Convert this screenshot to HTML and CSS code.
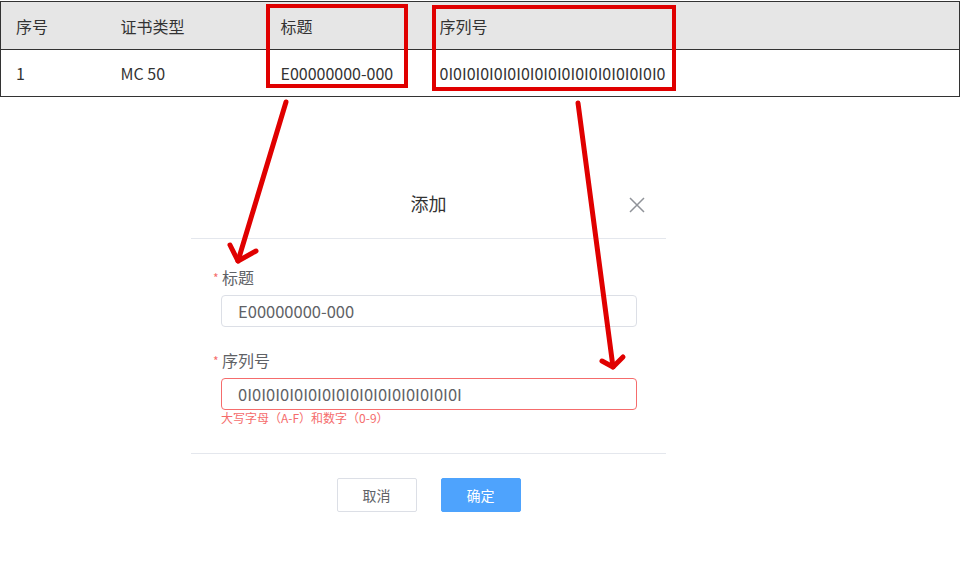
FILE: index.html
```html
<!DOCTYPE html>
<html lang="zh-CN">
<head>
    <meta charset="UTF-8">
    <meta name="viewport" content="width=device-width, initial-scale=1.0">
    <title>证书列表</title>
    <link rel="stylesheet" href="styles.css">
</head>
<body>
    <div class="page">
        <table class="cert-table">
            <colgroup>
                <col class="col-no">
                <col class="col-type">
                <col class="col-title">
                <col>
            </colgroup>
            <thead>
                <tr>
                    <th>序号</th>
                    <th>证书类型</th>
                    <th>标题</th>
                    <th>序列号</th>
                </tr>
            </thead>
            <tbody>
                <tr>
                    <td>1</td>
                    <td>MC 50</td>
                    <td>E00000000-000</td>
                    <td>0I0I0I0I0I0I0I0I0I0I0I0I0I0I0I0I0</td>
                </tr>
            </tbody>
        </table>

        <div class="dialog">
            <div class="dialog-header">
                <span class="dialog-title">添加</span>
                <button class="dialog-close" aria-label="关闭">
                    <svg width="16" height="16" viewBox="0 0 16 16">
                        <path d="M1 1 L15 15 M15 1 L1 15" stroke="#909399" stroke-width="1.5" fill="none"/>
                    </svg>
                </button>
            </div>

            <div class="dialog-body">
                <div class="form-item">
                    <label class="form-label"><span class="required">*</span>标题</label>
                    <input class="form-input" type="text" value="E00000000-000">
                </div>
                <div class="form-item">
                    <label class="form-label"><span class="required">*</span>序列号</label>
                    <input class="form-input is-error" type="text" value="0I0I0I0I0I0I0I0I0I0I0I0I0I0I0I0I">
                    <div class="form-error">大写字母（A-F）和数字（0-9）</div>
                </div>
            </div>

            <div class="dialog-footer">
                <button class="btn">取消</button>
                <button class="btn btn-primary">确定</button>
            </div>
        </div>

        <!-- 标注 -->
        <svg class="marks" width="960" height="563" viewBox="0 0 960 563">
            <g fill="none" stroke="#e00000" stroke-width="4">
                <rect x="268" y="6" width="138" height="80"/>
                <rect x="434" y="7" width="240" height="82"/>
            </g>
            <g fill="none" stroke="#e00000" stroke-width="5" stroke-linecap="round" stroke-linejoin="round">
                <path d="M286 102 L238 261"/>
                <path d="M230 245 L238 261 L256 251"/>
                <path d="M578 103 L613 367"/>
                <path d="M602 361 L613 367 L623 357"/>
            </g>
        </svg>
    </div>
</body>
</html>
```

FILE: styles.css
```css
body {
    margin: 0;
    font-family: "Noto Sans CJK SC", "Noto Sans", sans-serif;
    background: #fff;
    color: #333;
}

.page {
    position: relative;
    width: 960px;
    height: 563px;
    padding-top: 1px;
    box-sizing: border-box;
}

.cert-table {
    width: 960px;
    border-collapse: collapse;
    border: 1px solid #333;
    font-size: 16px;
}

.col-no {
    width: 105px;
}

.col-type {
    width: 160px;
}

.col-title {
    width: 159px;
}

.cert-table th,
.cert-table td {
    text-align: left;
    padding: 0 0 0 15px;
    font-weight: normal;
    white-space: nowrap;
}

.cert-table th {
    background: #e6e6e6;
    height: 47px;
    border-bottom: 1px solid #333;
}

.cert-table td {
    height: 46px;
}

/* 弹窗 */
.dialog {
    width: 475px;
    margin: 75px 0 0 191px;
    background: #fff;
}

.dialog-header {
    position: relative;
    height: 66px;
    line-height: 62px;
    text-align: center;
    border-bottom: 1px solid #e4e7ed;
}

.dialog-title {
    font-size: 18px;
    color: #333;
}

.dialog-close {
    position: absolute;
    right: 21px;
    top: 25px;
    width: 16px;
    height: 16px;
    padding: 0;
    border: none;
    background: none;
    line-height: 0;
}

.dialog-body {
    padding: 28px 29px 27px 22px;
}

.form-item + .form-item {
    margin-top: 23px;
}

.form-label {
    display: block;
    height: 20px;
    line-height: 20px;
    font-size: 16px;
    color: #606266;
    margin-bottom: 8px;
}

.required {
    display: inline-block;
    width: 9px;
    color: #f56c6c;
    font-size: 12px;
    vertical-align: top;
    margin-top: 1px;
}

.form-input {
    display: block;
    width: 416px;
    height: 32px;
    margin-left: 8px;
    padding: 0 16px;
    box-sizing: border-box;
    border: 1px solid #dcdfe6;
    border-radius: 4px;
    font-family: inherit;
    font-size: 16.5px;
    color: #606266;
    outline: none;
}

.form-input.is-error {
    border-color: #f56c6c;
}

.form-error {
    margin-left: 8px;
    line-height: 16px;
    font-size: 12px;
    color: #f56c6c;
}

.dialog-footer {
    display: flex;
    justify-content: center;
    gap: 24px;
    padding: 24px 0 23px;
    border-top: 1px solid #e4e7ed;
}

.btn {
    width: 80px;
    height: 34px;
    border: 1px solid #dcdfe6;
    border-radius: 2px;
    background: #fff;
    color: #606266;
    font-family: inherit;
    font-size: 14px;
    cursor: pointer;
}

.btn-primary {
    background: #4ea3fd;
    border-color: #4ea3fd;
    color: #fff;
}

.marks {
    position: absolute;
    left: 0;
    top: 0;
    pointer-events: none;
}
```
